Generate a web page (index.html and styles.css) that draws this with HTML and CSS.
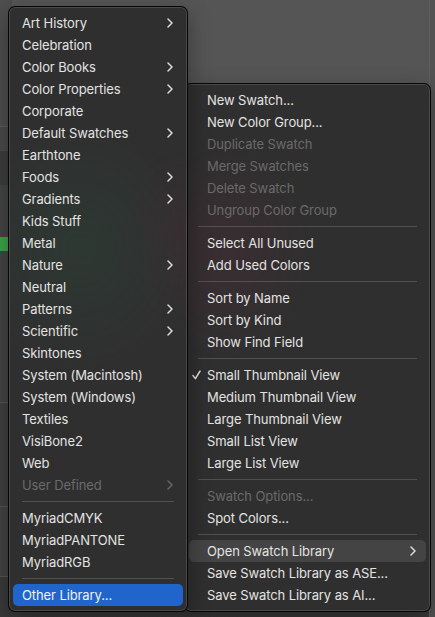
FILE: index.html
```html
<!DOCTYPE html>
<html>
<head>
<meta charset="utf-8">
<link rel="stylesheet" href="styles.css">
</head>
<body>
<div class="screen">
  <div class="backdrop">
    <div class="strip">
      <div class="band b1"></div>
      <div class="band b2"></div>
      <div class="band b3"></div>
      <div class="band b4"></div>
      <div class="band green"></div>
      <div class="band b5"></div>
      <div class="band b6"></div>
      <div class="band b7"></div>
      <div class="band b8"></div>
    </div>
    <div class="workspace"></div>
    <div class="edge"></div>
  </div>

  <div class="menu menu-right">
    <div class="item">New Swatch...</div>
    <div class="item">New Color Group...</div>
    <div class="item disabled">Duplicate Swatch</div>
    <div class="item disabled">Merge Swatches</div>
    <div class="item disabled">Delete Swatch</div>
    <div class="item disabled">Ungroup Color Group</div>
    <div class="sep"></div>
    <div class="item">Select All Unused</div>
    <div class="item">Add Used Colors</div>
    <div class="sep"></div>
    <div class="item">Sort by Name</div>
    <div class="item">Sort by Kind</div>
    <div class="item">Show Find Field</div>
    <div class="sep"></div>
    <div class="item checked"><svg class="check" width="9" height="10" viewBox="0 0 9 10"><path d="M1 5.6 L3.4 8.6 L8 1.2" fill="none" stroke="#e4e4e4" stroke-width="1.5" stroke-linecap="round" stroke-linejoin="round"/></svg>Small Thumbnail View</div>
    <div class="item">Medium Thumbnail View</div>
    <div class="item">Large Thumbnail View</div>
    <div class="item">Small List View</div>
    <div class="item">Large List View</div>
    <div class="sep"></div>
    <div class="item disabled">Swatch Options...</div>
    <div class="item">Spot Colors...</div>
    <div class="sep"></div>
    <div class="item hover sub">Open Swatch Library<svg class="chev" width="6" height="10" viewBox="0 0 6 10"><path d="M1 1 L5 5 L1 9" fill="none" stroke="#dcdcdc" stroke-width="1.5" stroke-linecap="round" stroke-linejoin="round"/></svg></div>
    <div class="item">Save Swatch Library as ASE...</div>
    <div class="item">Save Swatch Library as AI...</div>
  </div>

  <div class="menu menu-left">
    <div class="item sub">Art History<svg class="chev" width="6" height="10" viewBox="0 0 6 10"><path d="M1 1 L5 5 L1 9" fill="none" stroke="#dcdcdc" stroke-width="1.5" stroke-linecap="round" stroke-linejoin="round"/></svg></div>
    <div class="item">Celebration</div>
    <div class="item sub">Color Books<svg class="chev" width="6" height="10" viewBox="0 0 6 10"><path d="M1 1 L5 5 L1 9" fill="none" stroke="#dcdcdc" stroke-width="1.5" stroke-linecap="round" stroke-linejoin="round"/></svg></div>
    <div class="item sub">Color Properties<svg class="chev" width="6" height="10" viewBox="0 0 6 10"><path d="M1 1 L5 5 L1 9" fill="none" stroke="#dcdcdc" stroke-width="1.5" stroke-linecap="round" stroke-linejoin="round"/></svg></div>
    <div class="item">Corporate</div>
    <div class="item sub">Default Swatches<svg class="chev" width="6" height="10" viewBox="0 0 6 10"><path d="M1 1 L5 5 L1 9" fill="none" stroke="#dcdcdc" stroke-width="1.5" stroke-linecap="round" stroke-linejoin="round"/></svg></div>
    <div class="item">Earthtone</div>
    <div class="item sub">Foods<svg class="chev" width="6" height="10" viewBox="0 0 6 10"><path d="M1 1 L5 5 L1 9" fill="none" stroke="#dcdcdc" stroke-width="1.5" stroke-linecap="round" stroke-linejoin="round"/></svg></div>
    <div class="item sub">Gradients<svg class="chev" width="6" height="10" viewBox="0 0 6 10"><path d="M1 1 L5 5 L1 9" fill="none" stroke="#dcdcdc" stroke-width="1.5" stroke-linecap="round" stroke-linejoin="round"/></svg></div>
    <div class="item">Kids Stuff</div>
    <div class="item">Metal</div>
    <div class="item sub">Nature<svg class="chev" width="6" height="10" viewBox="0 0 6 10"><path d="M1 1 L5 5 L1 9" fill="none" stroke="#dcdcdc" stroke-width="1.5" stroke-linecap="round" stroke-linejoin="round"/></svg></div>
    <div class="item">Neutral</div>
    <div class="item sub">Patterns<svg class="chev" width="6" height="10" viewBox="0 0 6 10"><path d="M1 1 L5 5 L1 9" fill="none" stroke="#dcdcdc" stroke-width="1.5" stroke-linecap="round" stroke-linejoin="round"/></svg></div>
    <div class="item sub">Scientific<svg class="chev" width="6" height="10" viewBox="0 0 6 10"><path d="M1 1 L5 5 L1 9" fill="none" stroke="#dcdcdc" stroke-width="1.5" stroke-linecap="round" stroke-linejoin="round"/></svg></div>
    <div class="item">Skintones</div>
    <div class="item">System (Macintosh)</div>
    <div class="item">System (Windows)</div>
    <div class="item">Textiles</div>
    <div class="item">VisiBone2</div>
    <div class="item">Web</div>
    <div class="item disabled sub">User Defined<svg class="chev" width="6" height="10" viewBox="0 0 6 10"><path d="M1 1 L5 5 L1 9" fill="none" stroke="#666" stroke-width="1.5" stroke-linecap="round" stroke-linejoin="round"/></svg></div>
    <div class="sep"></div>
    <div class="item">MyriadCMYK</div>
    <div class="item">MyriadPANTONE</div>
    <div class="item">MyriadRGB</div>
    <div class="sep"></div>
    <div class="item selected">Other Library...</div>
  </div>
</div>
</body>
</html>
```

FILE: styles.css
```css
* { box-sizing: border-box; }
html, body { margin: 0; padding: 0; }
body {
  width: 435px;
  height: 617px;
  overflow: hidden;
  background: #4f4f4f;
  font-family: Inter, "Noto Sans", "Liberation Sans", sans-serif;
  font-size: 13px;
  letter-spacing: -0.1px;
}
.screen {
  position: relative;
  width: 435px;
  height: 617px;
  overflow: hidden;
}
.backdrop {
  display: flex;
  width: 435px;
  height: 617px;
}
.strip {
  width: 12px;
  display: flex;
  flex-direction: column;
  background: #474747;
}
.band { width: 100%; }
.b1 { height: 127px; background: #4e4e4e; border-bottom: 1px solid #5c5c5c; }
.b2 { height: 24px; background: #4a4a4a; }
.b3 { height: 34px; background: #3d3d3d; }
.b4 { height: 52px; background: #454545; }
.green { height: 14px; background: #3aa648; }
.b5 { height: 152px; background: #444444; border-bottom: 1px solid #575757; }
.b6 { height: 104px; background: #404040; border-bottom: 1px solid #555; }
.b7 { height: 70px; background: #434343; border-bottom: 1px solid #555; }
.b8 { flex: 1; background: #3a3a3a; }
.workspace {
  flex: 1;
  background: linear-gradient(180deg, #555555 0%, #535353 60%, #3a3a3a 100%);
}
.edge {
  width: 6px;
  background: #535353;
  border-left: 1px solid #5e5e5e;
}

.menu {
  position: absolute;
  display: flex;
  flex-direction: column;
  padding: 5px 0;
  border: 1px solid rgba(0, 0, 0, 0.85);
  border-radius: 7px;
  background-color: #2f2f2f;
  box-shadow: inset 0 0 0 1px rgba(255, 255, 255, 0.13), 0 8px 22px rgba(0, 0, 0, 0.35);
  color: #e3e3e3;
}
.menu-left {
  left: 8px;
  top: 6px;
  width: 180px;
  z-index: 2;
  background-image:
    radial-gradient(ellipse 110px 120px at 70px 240px, rgba(40, 80, 60, 0.28), rgba(40, 80, 60, 0) 100%),
    radial-gradient(ellipse 60px 90px at 170px 230px, rgba(90, 40, 60, 0.18), rgba(90, 40, 60, 0) 100%);
}
.menu-right {
  left: 184px;
  top: 83px;
  width: 247px;
  z-index: 1;
  background-image:
    radial-gradient(ellipse 90px 110px at 40px 170px, rgba(95, 40, 60, 0.22), rgba(95, 40, 60, 0) 100%);
}
.item {
  height: 22px;
  margin: 0 4px;
  display: flex;
  align-items: center;
  position: relative;
  white-space: nowrap;
  border-radius: 5px;
  line-height: 22px;
}
.menu-left .item { padding-left: 9px; }
.menu-right .item { padding-left: 18px; }
.item.disabled { color: #6a6a6a; }
.item.selected { background: #1f65cc; color: #f2f2f2; }
.item.hover { background: rgba(255, 255, 255, 0.1); }
.chev {
  margin-left: auto;
  margin-right: 10px;
}
.check {
  position: absolute;
  left: 3px;
  top: 6px;
}
.sep {
  height: 11px;
  display: flex;
  align-items: center;
  margin: 0 13px;
}
.sep::before {
  content: "";
  flex: 1;
  height: 1px;
  background: rgba(255, 255, 255, 0.16);
}
```
